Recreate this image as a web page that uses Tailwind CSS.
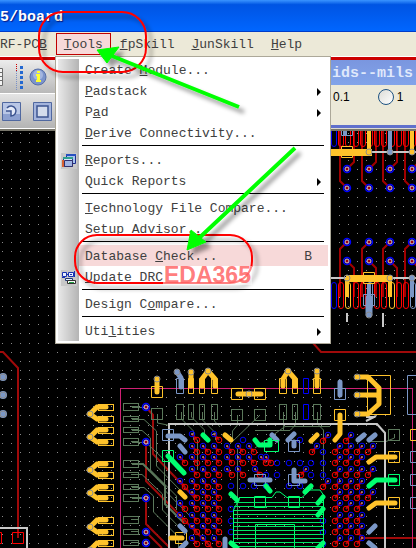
<!DOCTYPE html>
<html lang="en">
<head>
    <meta charset="UTF-8">
    <meta name="viewport" content="width=device-width, initial-scale=1.0">
    <title>5/board</title>
    <script src="https://cdn.jsdelivr.net/npm/@tailwindcss/browser@4"></script>
</head>
<body class="relative min-h-screen flex flex-col overflow-hidden bg-black font-['Liberation_Mono',monospace] text-[13px] leading-4 text-[#404040]">
    <header class="h-8 shrink-0 flex items-center pt-1 bg-linear-to-b from-[#3a94ff] via-[#0054e3] via-15% to-[#0066ff] border-b border-[#003cc8]">
        <h1 class="text-[15px] font-bold text-white [text-shadow:1px_1px_1px_#0a1883]">5/board</h1>
    </header>

    <div class="relative h-[25px] shrink-0 bg-[#ece9d8] border-b border-white">
        <nav class="flex gap-px pt-px -ml-2 [&>button]:pt-[2px]">
            <button class="h-[22px] px-[7px] border border-transparent whitespace-nowrap">RF-PC<u>B</u></button>
            <button class="h-[22px] px-[7px] border border-[#c00000] bg-[#f7d9d9] whitespace-nowrap"><u>T</u>ools</button>
            <button class="h-[22px] px-[7px] border border-transparent whitespace-nowrap"><u>f</u>pSkill</button>
            <button class="h-[22px] px-[7px] border border-transparent whitespace-nowrap"><u>J</u>unSkill</button>
            <button class="h-[22px] px-[7px] border border-transparent whitespace-nowrap"><u>H</u>elp</button>
        </nav>

        <!-- Tools menu -->
        <div class="absolute z-10 left-[55px] top-6 w-[276px] p-[2px] border border-[#aca899] bg-white">
            <div class="relative bg-linear-to-r from-[#e9e9e9] to-[#b4b4b4] bg-size-[21px_100%] bg-no-repeat [&_button]:pt-[2px]">
                <button class="flex w-full h-[21px] items-center pl-[27px]">Create&nbsp;<u>M</u>odule...</button>
                <button class="flex w-full h-[21px] items-center pl-[27px] pr-[7px]"><u>P</u>adstack<svg class="ml-auto" width="4" height="8"><path d="M0 0L4 4L0 8Z"/></svg></button>
                <button class="flex w-full h-[21px] items-center pl-[27px] pr-[7px]">P<u>a</u>d<svg class="ml-auto" width="4" height="8"><path d="M0 0L4 4L0 8Z"/></svg></button>
                <button class="flex w-full h-[21px] items-center pl-[27px]"><u>D</u>erive Connectivity...</button>
                <hr class="ml-6 mr-1 mt-[2px] mb-[3px] border-black">
                <button class="flex w-full h-[21px] items-center pl-[3px]">
                    <svg class="mr-2" width="16" height="16">
                        <path fill="#c8c8c8" d="M0 0h16v16H0z"/>
                        <path fill="#a8c4f0" stroke="#1c2c8c" d="M5.500 1.500h9v9h-9z"/>
                        <path fill="#2850c0" d="M5 1h10v2H5z"/>
                        <path fill="#d8e4fa" stroke="#20408c" d="M2.500 4.500h9v9h-9z"/>
                        <path fill="#30a090" d="M2 4h10v2H2z"/>
                        <path fill="#a0b4e4" stroke="#30306c" d="M3.500 7.500h8v6h-8z"/>
                        <path fill="#d86030" d="M1 7h2v7H1z"/>
                    </svg><u>R</u>eports...
                </button>
                <button class="flex w-full h-[21px] items-center pl-[27px] pr-[7px]">Quick Reports<svg class="ml-auto" width="4" height="8"><path d="M0 0L4 4L0 8Z"/></svg></button>
                <hr class="ml-6 mr-1 mt-[2px] mb-[3px] border-black">
                <button class="flex w-full h-[21px] items-center pl-[27px]"><u>T</u>echnology File Compare...</button>
                <button class="flex w-full h-[21px] items-center pl-[27px]">Setup Ad<u>v</u>isor...</button>
                <hr class="ml-6 mr-1 mt-[2px] mb-[3px] border-black">
                <div class="pl-[21px]">
                    <button class="flex w-full h-[21px] items-center pl-[6px] pr-4 bg-[#f7d9d9]">Database&nbsp;<u>C</u>heck...<span class="ml-auto">B</span></button>
                </div>
                <button class="flex w-full h-[21px] items-center pl-[3px]">
                    <svg class="mr-2" width="16" height="16">
                        <path fill="#c8c8c8" d="M0 0h16v16H0z"/>
                        <path fill="#e8f0ff" stroke="#1830b0" d="M1.500 2.500h4v4h-4zM7.500 2.500h5v4h-5z"/>
                        <path stroke="#1830b0" d="M1 7.500h3M5.500 4.500h2M13.500 1v6M9 4.500h2"/>
                        <path fill="#e8f0ff" stroke="#203878" d="M4.500 8.500h7v2h-7z"/>
                        <path fill="#f8f8f8" stroke="#303030" d="M6.500 10.500h8v3h-8z"/>
                        <path stroke="#20a040" d="M8 12.500h5"/>
                    </svg><u>U</u>pdate DRC
                </button>
                <hr class="ml-6 mr-1 mt-[2px] mb-[3px] border-black">
                <button class="flex w-full h-[21px] items-center pl-[27px]">Design C<u>o</u>mpare...</button>
                <hr class="ml-6 mr-1 mt-[2px] mb-[3px] border-black">
                <button class="flex w-full h-[21px] items-center pl-[27px] pr-[7px]">Uti<u>l</u>ities<svg class="ml-auto" width="4" height="8"><path d="M0 0L4 4L0 8Z"/></svg></button>
            </div>
        </div>
    </div>

    <div class="h-[3px] shrink-0 bg-[#cc0000]"></div>
    <div class="h-[71px] shrink-0 flex border-b-2 border-[#77756a] bg-[#dcdad0]">
        <!-- toolbar -->
        <div class="w-[331px] shrink-0">
            <div class="h-[33px] flex items-center bg-linear-to-b from-[#ececec] to-[#b9b9b9]">
                <svg width="24" height="26">
                    <path fill="#f4f4f4" stroke="#6c6c6c" d="M-6 4.500h8.500v17H-6M-6 8.500h8M-6 12.500h8M-6 16.500h8"/>
                    <path stroke="#cc0000" stroke-dasharray="1 1" d="M16.500 0v7"/>
                    <path stroke="#7890c8" stroke-dasharray="1 1" d="M16.500 7v19"/>
                    <path stroke="#2468d0" stroke-width="3" stroke-dasharray="3 2" d="M21.500 2v23"/>
                </svg>
                <button class="ml-[5px]" aria-label="Info">
                    <svg width="18" height="18">
                        <circle cx="9" cy="9" r="8" fill="#7c94cc" stroke="#5870a8"/>
                        <circle cx="9" cy="7" r="5" fill="#a4b6e0"/>
                        <path fill="#ffff30" d="M8 3h3v2H8zM7 6h4v6h1v2H7v-2h1V8H7z"/>
                    </svg>
                </button>
            </div>
            <div class="h-9 flex items-center gap-3 pl-[2px] border-y border-white bg-linear-to-b from-[#e4e4e4] to-[#b4b4b4]">
                <button aria-label="Shape arc">
                    <svg width="19" height="19">
                        <path fill="#b8c6e6" stroke="#5068a0" d="M.5.5h18v18H.5z"/>
                        <path fill="#8ca0d0" d="M1 12h17v6H1z"/>
                        <path fill="#e4eaf8" stroke="#3c5490" stroke-width="1.500" d="M4 9H9V14A5 5 0 1 0 5 6"/>
                    </svg>
                </button>
                <button aria-label="Shape rectangle">
                    <svg width="19" height="19">
                        <path fill="#a4b4dc" stroke="#5068a0" d="M.5.5h18v18H.5z"/>
                        <path fill="#d4dcec" stroke="#3c5490" stroke-width="1.500" d="M4 4h11v11H4z"/>
                    </svg>
                </button>
            </div>
        </div>
        <!-- grids panel -->
        <section class="flex-1 overflow-hidden">
            <h2 class="h-[25px] flex items-center pt-[2px] pl-px bg-linear-to-b from-[#7a96df] to-[#82a4ea] text-[15px] font-bold text-[#dfe8fb] whitespace-nowrap">ids--mils</h2>
            <div class="h-10 flex items-start gap-7 pt-1 pl-[2px] bg-[#ece9d8] font-['Liberation_Sans',sans-serif] text-xs leading-4 text-black">
                <span>0.1</span>
                <label class="flex items-center gap-[3px]">
                    <input type="radio" name="grid" class="appearance-none size-4 rounded-full border border-[#1d5281] bg-linear-to-br from-[#dcdcd7] to-white">1
                </label>
            </div>
            <div class="h-[3px] bg-[#6070cc]"></div>
        </section>
    </div>

    <!-- board canvas -->
    <svg class="w-full flex-1 min-h-[417px] bg-black" fill="none">
        <defs>
            <g id="ring"><circle r="3" stroke="#8c8c8c"/></g>
            <g id="pin"><circle r="3.500" stroke="#0000ff" stroke-width="1.500"/><circle r="2" fill="#a00000" stroke="#c8c8e8"/></g>
            <g id="nw"><path d="M0 0L-5-6" stroke="#a80a0a" stroke-width="2"/><circle r="2.800" stroke="#ff0000"/><circle cx="-5" cy="-6" r="2.800" stroke="#0000ff"/><path d="M-5-7v2" stroke="#ccc"/></g>
            <g id="ne"><path d="M0 0L5-6" stroke="#a80a0a" stroke-width="2"/><circle r="2.800" stroke="#ff0000"/><circle cx="5" cy="-6" r="2.800" stroke="#0000ff"/><path d="M5-7v2" stroke="#ccc"/></g>
            <g id="bv"><circle r="2.800" stroke="#0000ff"/></g>
        </defs>
        <g transform="translate(0 -131)">
            <path id="dots" stroke="#8a8a8a"/>

            <!-- connector strip -->
            <path id="fan" stroke="#a00000" stroke-width="2"/>
            <g id="pads" stroke="#ff0000"></g>
            <path stroke="#c8c8c8" stroke-width="2" d="M331 278H416M331 152H416M347 313v9M383 313v14"/>
            <path stroke="#ffc32b" stroke-width="7" d="M331 152.500H372M346 278.500H392"/>
            <path stroke="#ffc32b" stroke-width="4" d="M369 131v20M412 131v24M347 278v19M390 278v19"/>
            <path stroke="#7b97c6" stroke-width="4" d="M390 131v24M412 275v22M345 131v4M369 283v14"/>
            <path stroke="#7b97c6" stroke-width="7" stroke-linecap="round" d="M369 298v16"/>
            <path stroke="#7b97c6" d="M363.500 294.500h11v11h-11zM341.500 125.500h11v10h-11z"/>
            <path stroke="#ffc32b" d="M363.500 272.500h11v11h-11zM341.500 146.500h11v11h-11z"/>
            <g id="pins"></g>

            <!-- routes round the chip -->
            <path stroke="#a00a0a" stroke-width="2" d="M0 352H3L18 368V538M313 343L321 352H416M357 532L363 538H416M146 407L153 415V454L195 498M146 440V481L212 548M146 498V524L170 548M146 532L162 548"/>
            <path stroke="#5b785b" d="M132 407.500h14M132 419.500h12L156.500 431V466L184 494M132 430.500h10L150.500 438V470L176.500 496V510M132 442.500h14L164.500 460V490L190 516M132 474.500h10L162.500 494V510L185 533M132 487.500h12L153.500 496V512L178.500 537V548M157.500 414v9L170 425.500M181.500 412V419L193.500 431V440M191.500 412V417L204.500 430V440M202.500 412V420L215.500 433V440M214.500 412V421L220 427M237.500 415V425L232.500 431V440M260 415L232 442M255 448L285 426.500H330M283.500 412V430.500H255M295.500 412V425L290 430.500H266M317.500 412V424L323.500 430V480M394.500 434V438L386 441.500H370M197.500 440V470M237.500 448V540"/>
            <path stroke="#5b785b" stroke-width="2" d="M132 464h11L165 486V504L184 523M132 498h14"/>
            <path stroke="#d02074" d="M120.500 548V388.500H412.500V548"/>
            <path stroke="#c8c8c8" stroke-width="2" d="M169 548V424H377L385 433V548M0 528H27V548M366 421L376 416M366 417h9"/>
            <path stroke="#ff0000" d="M12.500 532.500h11v11h-11zM-8.500 532.500h10v11h-10z"/>
            <g id="greenPads" stroke="#5b785b"></g>
            <path stroke="#0000ff" d="M303.500 378.500h5v15h-5zM303.500 404.500h5v15h-5z"/>

            <g id="arrays"></g>

            <!-- yellow parts -->
            <g id="pairs" stroke="#ffc32b"></g>
            <path stroke="#ffc32b" d="M151.500 386.500h11v11h-11zM188.500 378.500h5v15h-5zM199.500 378.500h5v15h-5zM211.500 378.500h6v15h-6zM231.500 388.500h11v11h-11zM254.500 388.500h11v11h-11zM279.500 378.500h7v15h-7zM292.500 378.500h5v15h-5zM313.500 378.500h7v15h-7zM334.500 409.500h11v11h-11zM367.500 375.500h23v39h-23zM388.500 451.500h11v11h-11zM388.500 497.500h11v11h-11zM175.500 532.500h11v11h-11zM410.500 429.500h12v11h-12z"/>
            <path stroke="#ffc32b" stroke-width="5" stroke-linecap="round" stroke-linejoin="round" d="M157 379V392M191 372V386M208 371L202 379V386M208 371L215 379V386M238 394H261M288 371L283 379V386M288 371L295 379V386M317 371V386M340 415V434L335 440M357 377H368L379 388V404L368 414H357M357 395H379M317 435L311 441M225 435L231 440M395 457H376L369 462M395 503H376L369 508M180 492L185 497M171 538H182"/>
            <!-- slate parts -->
            <path stroke="#7b97c6" d="M176.500 378.500h7v15h-7zM334.500 388.500h11v11h-11zM407.500 375.500h12v39h-12zM162.500 429.500h11v11h-11zM288.500 440.500h11v11h-11zM288.500 474.500h11v11h-11zM254.500 474.500h11v11h-11zM410.500 451.500h12v11h-12zM410.500 474.500h12v11h-12zM410.500 497.500h12v11h-12z"/>
            <path stroke="#7b97c6" stroke-width="5" stroke-linecap="round" stroke-linejoin="round" d="M177 372L181 378V387M340 382V395M168 436H180L185 440M272 435L277 440M294 434L288 440M364 435L358 440M375 435L369 440M294 442V446M294 470V481H305M250 480H270M180 446L185 452M180 526L185 531M186 543L181 548M375 526L369 532M369 543L375 548M225 539V548"/>
            <circle cx="3" cy="377" r="4" fill="#7b97c6"/><circle cx="3" cy="395" r="4" fill="#7b97c6"/><circle cx="3" cy="414" r="4" fill="#7b97c6"/>
            <!-- green copper -->
            <path stroke="#00ff70" d="M162.500 450.500h11v11h-11zM388.500 474.500h11v11h-11zM288.500 496.500h11v11h-11zM254.500 496.500h11v11h-11zM255.500 548V524.500H294.500V548M233.500 548V510L240 497.500H272L276 492H280L287 497.500H302L310 490H320L323.500 495V548M264.500 440.500h14v11h-14z"/>
            <path stroke="#00e864" d="M234 502.500H323M234 506.500H323M234 510.500H323M234 514.500H323M234 518.500H323M234 522.500H323M234 526.500H323M234 530.500H323M234 534.500H323M234 538.500H323M234 542.500H323M234 546.500H323"/>
            <path stroke="#00ff70" stroke-width="5" stroke-linecap="round" stroke-linejoin="round" d="M168 456L184 473M203 435L208 440M255 440L259 445H270V440M231 494L237 500M266 486L270 491M311 486L305 492M323 497L318 503M323 509L318 515M395 480H376L369 486M231 543L237 548M323 543L318 548"/>
            <g id="rings"></g>
        </g>
    </svg>

    <!-- callouts over the window -->
    <svg class="absolute z-20 left-0 top-0 w-full h-[345px] pointer-events-none" fill="none">
        <defs>
            <filter id="sh" x="-20%" y="-20%" width="150%" height="150%">
                <feDropShadow dx="5" dy="5" stdDeviation="2" flood-color="#000" flood-opacity=".4"/>
            </filter>
        </defs>
        <g filter="url(#sh)">
            <rect x="39" y="12" width="107" height="60" rx="24" stroke="#ff0000" stroke-width="2"/>
            <rect x="75" y="235" width="177" height="48" rx="22" stroke="#ff0000" stroke-width="2"/>
        </g>
        <g filter="url(#sh)" fill="#00ff00" stroke="#00ff00">
            <path stroke-width="4" d="M112 56L239 107M197 240L295 148"/>
            <path d="M97 50L119 47L107 63ZM187 250L191 230L206 242Z"/>
        </g>
    </svg>
    <p class="absolute z-20 left-[163px] top-[266px] h-[19px] px-px bg-white/50 font-['Liberation_Sans',sans-serif] font-bold text-[23px] leading-[19px] text-[#ff5a5a]/80">EDA365</p>

    <script>
        const $ = id => document.getElementById(id);
        const use = (id, x, y) => `<use href="#${id}" x="${x}" y="${y}"/>`;

        // grid dots
        let d = '';
        for (let x = 2; x < 1600; x += 9.11)
            for (let y = 133; y < 1200; y += 9.11) d += `M${Math.round(x)} ${Math.round(y) + 0.5}h1`;
        $('dots').setAttribute('d', d);

        // connector fan-out
        let fan = '', pins = '';
        [347, 369, 390, 412].forEach(x => {
            fan += `M${x} 188L${x - 7} 181V131M${x} 169L${x + 7} 162V131M${x} 242L${x - 7} 249V297M${x} 261L${x + 7} 268V297`;
            [169, 188, 242, 261].forEach(y => pins += use('pin', x, y));
        });
        $('fan').setAttribute('d', fan);
        $('pins').innerHTML = pins;

        const padColors = { 0: '#0000ff', 2: '#ffc32b', 5: '#7b97c6', 8: '#ffc32b', 11: '#7b97c6' };
        let pads = '';
        for (let i = 0; i < 12; i++) {
            const x = Math.round(331 + i * 7.2) + 0.5, c = padColors[i] || '#ff0000';
            pads += `<rect x="${x}" y="282.5" width="5" height="26" rx="2.5" stroke="${c}"/>`;
            pads += `<rect x="${x}" y="120.5" width="5" height="26" rx="2.5" stroke="${i ? '#ff0000' : c}"/>`;
        }
        $('pads').innerHTML = pads;

        // dark green pads: x, y, w, h
        let gp = '';
        [[403, 8], [416, 6], [427, 6], [438, 8], [460, 8], [472, 6], [484, 6], [494, 8], [516, 8], [529, 6], [540, 6]].forEach(([y, h]) => {
            gp += `<rect x="123.5" y="${y}.5" width="15" height="${h - 1}"/><path d="M131 ${y + h / 2 - 0.5}h8"/>`;
        });
        [[176, 404, 7, 15], [188, 404, 5, 15], [199, 404, 5, 15], [211, 404, 6, 15], [231, 409, 11, 11], [254, 409, 11, 11],
         [279, 404, 7, 15], [292, 404, 5, 15], [313, 404, 7, 15], [151, 408, 11, 11], [388, 429, 11, 11]].forEach(([x, y, w, h]) => {
            gp += `<rect x="${x}.5" y="${y}.5" width="${w}" height="${h}"/>`;
        });
        $('greenPads').innerHTML = gp;

        // yellow pad pairs on the left edge
        let pairs = '', rings = '';
        [[414, 407, 419], [437, 430, 442], [470, 464, 475], [493, 487, 498], [527, 520, 532], [550, 543, 555]].forEach(([v, a, b]) => {
            pairs += `<path stroke-width="5" stroke-linecap="round" d="M106 ${a}H97L90 ${v}L97 ${b}H106"/>`;
            pairs += `<rect x="98.5" y="${a - 3}.5" width="15" height="6"/><rect x="98.5" y="${b - 3}.5" width="15" height="6"/>`;
            rings += use('ring', 90, v);
        });
        $('pairs').innerHTML = pairs;
        [[157, 379], [177, 372], [191, 372], [208, 371], [249, 394], [288, 371], [317, 371], [357, 377], [357, 395], [357, 414],
         [3, 377], [3, 395], [3, 414], [369, 152], [390, 152], [412, 152], [347, 278], [390, 278], [412, 278], [369, 315]].forEach(([x, y]) => rings += use('ring', x, y));
        [[146, 407], [146, 442], [146, 498], [146, 532], [146, 543]].forEach(([x, y]) => rings += use('pin', x, y));
        $('rings').innerHTML = rings;

        // ball array
        let balls = '';
        const rows = [452, 463, 475, 487, 498, 509, 521, 532, 544];
        rows.forEach((y, r) => {
            [197, 208, 219].forEach(x => balls += use('nw', x, y));
            if ([1, 3, 5, 6].includes(r)) balls += use('nw', 185, y);
            [335, 346, 357].forEach(x => balls += use('ne', x, y));
            if (r % 2 === 0 && r < 6) balls += use('ne', 368, y);
            if (r < 4) balls += use(r === 3 ? 'ne' : 'bv', 323, y);
            if (r < 3) balls += use('nw', 232, y) + use('nw', 243, y);
            if (r > 5) balls += use('bv', 323, y);
        });
        [[254, 452], [254, 463], [266, 463], [271, 463], [260, 475]].forEach(([x, y]) => balls += use('nw', x, y));
        [[312, 452], [301, 475], [323, 441], [346, 441]].forEach(([x, y]) => balls += use('ne', x, y));
        [[277, 463], [289, 463], [300, 463], [311, 463], [266, 475], [277, 475], [311, 475], [266, 486], [289, 486], [300, 486],
         [243, 440], [231, 486], [243, 486], [254, 486], [231, 509], [231, 532], [231, 521], [300, 440]].forEach(([x, y]) => balls += use('bv', x, y));
        balls += use('nw', 197, 440) + use('nw', 219, 440);
        $('arrays').innerHTML = balls;
    </script>
</body>
</html>
